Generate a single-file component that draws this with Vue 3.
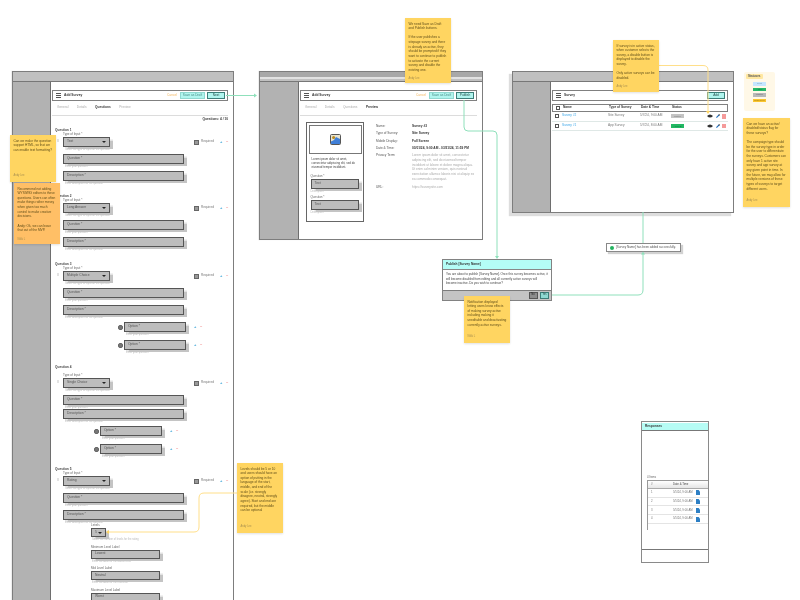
<script setup>
const questions = [
  { id: 1, gap: 'g7', type: 'Text', options: [] },
  { id: 2, gap: 'g10', type: 'Long Answer', options: [] },
  { id: 3, gap: 'g12', type: 'Multiple Choice', options: ['Option *', 'Option *'], indent: 'opt-far' },
  { id: 4, gap: 'g9', type: 'Single Choice', options: ['Option *', 'Option *'], indent: 'opt-near', low: true },
  { id: 5, gap: 'g7', type: 'Rating', options: [], rating: true }
]
const levels = [
  { label: 'Minimum Level Label', value: 'Lowest', help: 'Enter the label for the lowest level' },
  { label: 'Mid Level Label', value: 'Neutral', help: 'Enter the label for the mid level' },
  { label: 'Maximum Level Label', value: 'Worst', help: '' }
]
const details = [
  ['Name:', 'Survey #3'],
  ['Type of Survey:', 'Site Survey'],
  ['Mobile Display:', 'Full Screen'],
  ['Date & Time:', '03/01/24, 9:00 AM - 03/31/24, 11:59 PM']
]
const surveys = [
  { name: 'Survey #2', type: 'Site Survey', date: '5/7/24, 9:00 AM', status: 'Inactive', cls: 'st-gray' },
  { name: 'Survey #1', type: 'App Survey', date: '5/7/24, 8:00 AM', status: 'ACTIVE', cls: 'st-green' }
]
const responses = [1, 2, 3, 4]
const notes = [
  { cls: 'n1', paras: ['Can we make the question support HTML, so that we can enable text formatting?'], by: 'Andy Lee' },
  { cls: 'n2', paras: ['Recommend not adding WYSIWIG editors to these questions. Users can often make things rather messy when given too much control to make creative decisions.', 'Andy: Ok, we can leave that out of the MVP.'], by: 'Nikki L' },
  { cls: 'n3', paras: ['We need Save as Draft and Publish buttons.', 'If the user publishes a sitepage survey and there is already an active, they should be prompted if they want to continue to publish to activate the current survey and disable the existing one.'], by: 'Andy Lee' },
  { cls: 'n4', paras: ['If survey is in active status, when customer selects the survey, a disable button is displayed to disable the survey.', 'Only active surveys can be disabled.'], by: 'Andy Lee' },
  { cls: 'n5', paras: ['Can we have an active/ disabled/status flag for these surveys?', 'The campaign type should be the survey type in order for the user to differentiate the surveys. Customers can only have 1 active site survey and app survey at any given point in time. In the future, we may allow for multiple versions of these types of surveys to target different users.'], by: 'Andy Lee' },
  { cls: 'n6', paras: ['Levels should be 5 or 10 and users should have an option of putting in the language of the start, middle, and end of the scale (i.e. strongly disagree, neutral, strongly agree). Start and end are required, but the middle can be optional'], by: 'Andy Lee' },
  { cls: 'n7', paras: ['Notification displayed letting users know effects of making survey active including making it uneditable and deactivating currently active surveys.'], by: 'Nikki L' }
]
</script>

<template>
  <div class="canvas">
    <!-- Window 1: questions -->
    <section class="win w1">
      <div class="topbar"></div>
      <div class="winbody">
        <aside class="side"></aside>
        <main class="content">
          <header class="head">
            <span class="burger"><i></i><i></i><i></i></span>
            <b class="head-title">Add Survey</b>
            <span class="cancel">Cancel</span>
            <span class="btn btn-draft">Save as Draft</span>
            <span class="btn btn-next">Next</span>
          </header>
          <nav class="tabs">
            <span>General</span><span>Details</span><span class="on">Questions</span><span>Preview</span>
          </nav>
          <div class="count">Questions: 4 / 10</div>
          <div v-for="q in questions" :key="q.id" class="question" :class="q.gap">
            <div class="q-title">Question {{ q.id }}</div>
            <div class="label" :class="{ 'label-low': q.low }">Type of Input *</div>
            <div class="q-row">
              <span class="grip">⠿</span>
              <div class="box select"><span>{{ q.type }}</span><em class="caret"></em></div>
              <div class="req">
                <span class="check"></span>
                <span class="req-text">Required</span>
                <span class="plus">+</span><span class="minus">−</span>
              </div>
            </div>
            <div class="help hq">Select the type of input for the question</div>
            <div class="box wide"><span>Question *</span></div>
            <div class="help hq">Enter your question</div>
            <div class="box wide" :class="{ tight: q.low }"><span>Description *</span></div>
            <div class="help hq">Enter description for the question</div>
            <div v-for="(o, i) in q.options" :key="i" class="opt" :class="q.indent">
              <div class="opt-row">
                <span class="check round"></span>
                <div class="box optbox"><span>{{ o }}</span></div>
                <span class="plus">+</span><span class="minus">−</span>
              </div>
              <div class="help ho">Enter your question</div>
            </div>
            <div v-if="q.rating" class="rating">
              <div class="label">Levels</div>
              <div class="box lvl"><span>5</span><em class="caret"></em></div>
              <div class="help">Select the number of levels for the rating</div>
              <div v-for="l in levels" :key="l.label" class="lvl-item">
                <div class="label">{{ l.label }}</div>
                <div class="box lvl-box"><span>{{ l.value }}</span></div>
                <div class="help">{{ l.help }}</div>
              </div>
            </div>
          </div>
        </main>
      </div>
    </section>

    <!-- Window 2: preview -->
    <section class="win w2">
      <div class="topbar"></div>
      <div class="winbody">
        <aside class="side"></aside>
        <main class="content">
          <header class="head">
            <span class="burger"><i></i><i></i><i></i></span>
            <b class="head-title">Add Survey</b>
            <span class="cancel">Cancel</span>
            <span class="btn btn-draft">Save as Draft</span>
            <span class="btn btn-next">Publish</span>
          </header>
          <nav class="tabs tabs2">
            <span>General</span><span>Details</span><span>Questions</span><span class="on">Preview</span>
          </nav>
          <div class="preview">
            <div class="card">
              <div class="card-img">
                <svg width="11" height="11" viewBox="0 0 11 11">
                  <rect x="0.5" y="0.5" width="10" height="10" rx="1" fill="#e9e4cf" stroke="#555" />
                  <circle cx="3.6" cy="3.4" r="1.5" fill="#b98a1e" />
                  <path d="M1 10V7.5L4 6l2-3 4 2v5z" fill="#3f7fd8" />
                </svg>
              </div>
              <p class="card-text">Lorem ipsum dolor sit amet, consectetur adipiscing elit, sed do eiusmod tempor incididunt.</p>
              <div class="label">Question *</div>
              <div class="box cardbox"><span>Text</span></div>
              <div class="help">Description</div>
              <div class="label lab2">Question *</div>
              <div class="box cardbox"><span>Text</span></div>
              <div class="help">Description</div>
            </div>
            <dl class="facts">
              <template v-for="d in details" :key="d[0]">
                <dt>{{ d[0] }}</dt><dd class="strong">{{ d[1] }}</dd>
              </template>
              <dt>Privacy Term:</dt>
              <dd class="lorem">Lorem ipsum dolor sit amet, consectetur adipiscing elit, sed do eiusmod tempor incididunt ut labore et dolore magna aliqua. Ut enim ad minim veniam, quis nostrud exercitation ullamco laboris nisi ut aliquip ex ea commodo consequat.</dd>
              <dt>URL:</dt>
              <dd class="lorem">https://surveysite.com</dd>
            </dl>
          </div>
        </main>
      </div>
    </section>

    <!-- Window 3: list -->
    <section class="win w3">
      <div class="topbar"></div>
      <div class="winbody">
        <aside class="side"></aside>
        <main class="content">
          <header class="head">
            <span class="burger"><i></i><i></i><i></i></span>
            <b class="head-title">Survey</b>
            <span class="btn btn-next btn-add">Add</span>
          </header>
          <div class="grid-row grid-head">
            <span class="check hollow"></span>
            <b>Name</b><b>Type of Survey</b><b>Date &amp; Time</b><b>Status</b>
          </div>
          <div v-for="s in surveys" :key="s.name" class="grid-row grid-item">
            <span class="check hollow"></span>
            <span class="link">{{ s.name }}</span>
            <span>{{ s.type }}</span>
            <span>{{ s.date }}</span>
            <span class="status" :class="s.cls">{{ s.status }}</span>
            <svg class="ic" width="6" height="4" viewBox="0 0 6 4"><path d="M0 2q3-3 6 0q-3 3-6 0z" fill="#333" /></svg>
            <svg class="ic" width="4" height="4" viewBox="0 0 4 4"><path d="M.4 3.6L3 1" stroke="#2470c0" stroke-width="1.1" /><circle cx="3.2" cy=".9" r=".7" fill="#222" /></svg>
            <span class="trash"></span>
          </div>
        </main>
      </div>
    </section>

    <!-- Status legend -->
    <aside class="legend">
      <b class="legend-title">Statuses</b>
      <div class="chips">
        <span class="chip c-blue">Draft</span>
        <span class="chip c-green">Active</span>
        <span class="chip c-gray">Inactive</span>
        <span class="chip c-yellow">Scheduled</span>
      </div>
    </aside>

    <!-- Publish modal -->
    <section class="modal">
      <div class="modal-title">Publish [Survey Name]</div>
      <p class="modal-body">You are about to publish [Survey Name]. Once this survey becomes active, it will become disabled from editing and all currently active surveys will become inactive. Do you wish to continue?</p>
      <div class="modal-foot">
        <span class="mbtn mno">No</span>
        <span class="mbtn myes">Yes</span>
      </div>
    </section>

    <!-- Toast -->
    <div class="toast">
      <svg width="4" height="4" viewBox="0 0 4 4"><circle cx="2" cy="2" r="2" fill="#23b35f" /></svg>
      <span>[Survey Name] has been added successfully.</span>
    </div>

    <!-- Responses -->
    <section class="resp">
      <div class="resp-title">Responses</div>
      <div class="resp-main">
        <div class="resp-count">4 Items</div>
        <div class="resp-table">
          <div class="resp-row resp-head"><span>#</span><span>Date &amp; Time</span></div>
          <div v-for="r in responses" :key="r" class="resp-row">
            <span>{{ r }}</span><span>5/5/24, 9:00 AM</span>
            <svg width="4" height="5" viewBox="0 0 4 5"><path d="M0 0h2.6L4 1.4V5H0z" fill="#2d7fc4" /></svg>
          </div>
        </div>
      </div>
      <div class="resp-foot"></div>
    </section>

    <!-- Connectors -->
    <svg class="wires" width="800" height="600" viewBox="0 0 800 600">
      <g fill="none" stroke="#8fe0bb" stroke-width="1">
        <path d="M226 95.5H255" />
        <path d="M464 100V127Q464 131 468 131H493Q497 131 497 135V257" />
        <path d="M552 295H638Q643 295 643 290V253" />
        <path d="M643 212V243" />
      </g>
      <g fill="#8fe0bb">
        <path d="M257 95.5l-3-2v4z" />
        <path d="M497 259l-2-3h4z" />
        <path d="M643 251.500l-2 3h4z" />
      </g>
      <g fill="none" stroke="#ffdf8a" stroke-width="1">
        <path d="M659 65.500H703Q708 65.500 708 70V112" />
        <path d="M237 493H204Q199 493 199 498V527Q199 532 194 532H109" />
      </g>
      <g fill="#ffd561">
        <path d="M708 114l-2-3h4z" />
        <path d="M106 532l3-2v4z" />
      </g>
    </svg>

    <!-- Sticky notes -->
    <article v-for="n in notes" :key="n.cls" class="note" :class="n.cls">
      <p v-for="(p, i) in n.paras" :key="i">{{ p }}</p>
      <small>{{ n.by }}</small>
    </article>
  </div>
</template>

<style scoped>
.canvas {
  position: relative;
  width: 800px;
  height: 600px;
  overflow: hidden;
  background: #fff;
  font-family: "Liberation Sans", Arial, sans-serif;
  font-size: 3.2px;
  line-height: 1.2;
  color: #555;
  filter: blur(0.3px);
}
.win {
  position: absolute;
  display: flex;
  flex-direction: column;
  background: #fff;
  border: 1.5px solid #7d7d7d;
  box-sizing: border-box;
  box-shadow: -1.5px 0 1px #ddd;
}
.w1 { left: 12px; top: 71px; width: 222px; height: 545px; }
.w2 { left: 259px; top: 71px; width: 224px; height: 169px; }
.w3 { left: 512px; top: 71px; width: 222px; height: 142px; box-shadow: -3px 3px 1px #ddd; }
.topbar {
  flex: none;
  height: 9px;
  background: #c0c0c0;
  border-bottom: 1.5px solid #777;
}
.w2 .topbar { background: linear-gradient(#a8a8a8 0 60%, #e2e2e2 60% 75%, #c0c0c0 75%); }
.winbody { flex: 1; display: flex; min-height: 0; }
.side {
  flex: none;
  width: 37px;
  background: #b2b2b2;
  border-right: 1.5px solid #6e6e6e;
}
.content { flex: 1; padding: 8px 5px 0 1px; min-width: 0; }
.head {
  display: flex;
  align-items: center;
  height: 11px;
  box-sizing: border-box;
  border: 1.5px solid #808080;
  padding: 0 2px 0 3px;
  color: #333;
}
.burger { display: flex; flex-direction: column; justify-content: space-between; width: 5px; height: 5px; margin-right: 3px; }
.burger i { display: block; height: 1px; background: #555; }
.head-title { font-size: 3.300px; }
.cancel { margin-left: auto; margin-right: 3px; color: #f4b860; }
.btn {
  box-sizing: border-box;
  height: 7px;
  display: flex;
  align-items: center;
  justify-content: center;
  background: #b0f5ee;
  color: #4b8f88;
}
.btn-draft { width: 25px; border: 1px solid #8fd8d0; margin-right: 2px; }
.btn-next { width: 18px; border: 1.5px solid #3d7f7a; color: #264f4c; }
.btn-add { margin-left: auto; }
.tabs { display: flex; height: 15px; align-items: center; border-bottom: 1px solid #dcdcdc; box-sizing: border-box; padding-left: 5px; color: #aaa; }
.tabs span { margin-right: 8.500px; }
.tabs .on { color: #333; font-weight: 700; }
.count { text-align: right; margin-top: 2px; color: #333; font-weight: 700; height: 4px; }
.g7 { margin-top: 7px; }
.g9 { margin-top: 9px; }
.g10 { margin-top: 10px; }
.g12 { margin-top: 12px; }
.question:first-of-type { margin-top: 4px; }
.q-title { margin-left: 3px; height: 4px; font-weight: 700; color: #444; }
.label { margin-left: 11px; height: 3.5px; color: #666; margin-bottom: 0.5px; font-size: 3px; }
.label-low { margin-top: 4px; }
.q-row { display: flex; align-items: center; }
.grip { width: 11px; text-align: center; font-size: 3px; color: #888; }
.box {
  position: relative;
  box-sizing: border-box;
  height: 10px;
  display: flex;
  align-items: center;
  padding: 0 3px;
  background: #bdbdbd;
  border: 1.5px solid #555;
  box-shadow: 2.500px 1.500px 1px #c4c4c4;
  color: #555;
  font-size: 3.300px;
}
.select { width: 47px; }
.caret {
  margin-left: auto;
  width: 0;
  height: 0;
  border-left: 2px solid transparent;
  border-right: 2px solid transparent;
  border-top: 2px solid #222;
}
.req { margin-left: auto; margin-right: -3px; display: flex; align-items: center; }
.check {
  display: inline-block;
  box-sizing: border-box;
  width: 5px;
  height: 5px;
  background: #999;
  border: 1px solid #666;
}
.round { border-radius: 2px; background: #777; }
.hollow { background: #fff; border: 1px solid #555; }
.req-text { margin: 0 7px 0 2px; color: #777; width: 12px; }
.plus { color: #3aa3d6; width: 6px; font-weight: 700; font-size: 4px; }
.minus { color: #ef8a8a; width: 5px; font-weight: 700; font-size: 4px; }
.help { margin: 1px 0 3px 13px; height: 3px; font-size: 2.600px; color: #b8b8b8; white-space: nowrap; }
.wide { margin-left: 11px; width: 121px; }
.tight { margin-top: -3px; }
.opt { display: flex; flex-direction: column; margin-top: 1px; }
.opt-row { display: flex; align-items: center; }
.opt-far { margin-left: 66px; }
.opt-near { margin-left: 42px; }
.optbox { width: 62px; margin: 0 8px 0 1px; }
.ho { margin-left: 8px; }
.rating { margin: -3px 0 0 39px; }
.rating .label { margin-left: 0; }
.rating .help { margin-left: 1px; }
.lvl { width: 15px; height: 9px; }
.lvl-item { margin-top: 4.500px; }
.lvl-box { width: 69px; height: 9px; }
.w2 .side { width: 38px; }
.preview { display: flex; margin-top: 6px; padding-left: 6px; }
.card {
  flex: none;
  box-sizing: border-box;
  width: 58px;
  height: 100px;
  padding: 1.5px;
  border: 1.5px solid #666;
}
.card-img {
  height: 29px;
  display: flex;
  align-items: center;
  justify-content: center;
  border: 1px solid #777;
  box-sizing: border-box;
}
.card-text { margin: 3px 3px 6px; line-height: 4.200px; color: #444; font-size: 2.900px; }
.card .label { margin-left: 2px; }
.lab2 { margin-top: 3px; }
.cardbox { margin-left: 2px; width: 48px; }
.card .help { margin-left: 2px; margin-bottom: 0; }
.facts {
  margin: 2px 0 0 12px;
  flex: 1;
  display: grid;
  grid-template-columns: 36px 1fr;
  row-gap: 3.300px;
  align-content: start;
  color: #555;
  font-size: 3.200px;
  line-height: 4px;
}
.facts dd { margin: 0; }
.strong { font-weight: 700; color: #333; white-space: nowrap; }
.lorem { color: #aaa; line-height: 4.700px; }
.grid-row {
  display: grid;
  align-items: center;
  padding-left: 3px;
  box-sizing: border-box;
}
.grid-row .check { width: 4px; height: 4px; }
.grid-head {
  margin-top: 3px;
  height: 8px;
  border: 1.500px solid #808080;
  color: #333;
  grid-template-columns: 7px 46px 32px 31px 36px;
}
.grid-item {
  grid-template-columns: 7px 46px 32px 31px 36px 9px 6px 6px;
  height: 9.500px;
  border-bottom: 1px solid #dfe8e6;
  color: #777;
}
.link { color: #3aa6e8; }
.status {
  width: 13px;
  height: 4px;
  font-size: 2.200px;
  line-height: 4px;
  text-align: center;
}
.st-gray { background: #c4c4c4; color: #777; }
.st-green { background: #22b863; color: #0a6a35; }
.ic { display: block; }
.trash { display: block; width: 3.500px; height: 4.500px; background: #f59a9a; }
.legend {
  position: absolute;
  left: 744px;
  top: 72px;
  width: 31px;
  height: 39px;
  box-sizing: border-box;
  padding: 1.500px 2px;
  background: #fff8e7;
  border-radius: 2px;
}
.legend-title {
  display: inline-block;
  padding: 1px 2px;
  background: #ffe7a0;
  border-radius: 1px;
  font-size: 3px;
  color: #555;
}
.chips { display: flex; flex-direction: column; align-items: center; gap: 2px; margin-top: 3px; }
.chip { width: 13px; height: 3.500px; font-size: 2.200px; line-height: 3.500px; text-align: center; }
.c-blue { background: #c5e6ff; color: #7a9ab0; }
.c-green { background: #25b868; color: #0b6a36; }
.c-gray { background: #b8b8b8; color: #666; }
.c-yellow { background: #fac52e; color: #96720a; }
.modal {
  position: absolute;
  left: 442px;
  top: 259px;
  width: 110px;
  height: 42px;
  box-sizing: border-box;
  display: flex;
  flex-direction: column;
  border: 1.500px solid #828282;
  background: #fff;
}
.modal-title {
  flex: none;
  height: 9px;
  padding: 0 3px;
  line-height: 9px;
  background: #b4fdf6;
  border-bottom: 1px solid #888;
  font-weight: 700;
  color: #333;
}
.modal-body { flex: 1; margin: 0; padding: 2px 3px; line-height: 4.500px; font-size: 3px; color: #444; }
.modal-foot {
  flex: none;
  height: 9.500px;
  display: flex;
  align-items: center;
  justify-content: flex-end;
  gap: 2.500px;
  padding-right: 2px;
  background: #c4c4c4;
  border-top: 1.500px solid #7c7c7c;
}
.mbtn { width: 9px; height: 7px; box-sizing: border-box; line-height: 4px; text-align: center; font-size: 2.600px; }
.mno { background: #8c8c8c; border: 1.500px solid #555; color: #222; }
.myes { background: #8ed9d2; border: 1.500px solid #3c7d78; color: #244; }
.toast {
  position: absolute;
  left: 606px;
  top: 243px;
  width: 75px;
  height: 9px;
  box-sizing: border-box;
  display: flex;
  align-items: center;
  gap: 2px;
  padding-left: 3px;
  background: #fff;
  border: 1.500px solid #888;
  box-shadow: 2px 2px 1px #d2d2d2;
  font-size: 3px;
  color: #555;
}
.resp {
  position: absolute;
  left: 641px;
  top: 421px;
  width: 68px;
  height: 142px;
  box-sizing: border-box;
  display: flex;
  flex-direction: column;
  border: 1.500px solid #8a8a8a;
  background: #fff;
}
.resp-title {
  flex: none;
  height: 7px;
  margin-top: 1px;
  line-height: 7px;
  padding-left: 3px;
  background: #b6fcf5;
  border-bottom: 1px solid #777;
  font-weight: 700;
  color: #333;
}
.resp-main { flex: 1; padding: 45px 0 0 5px; }
.resp-count { font-size: 2.800px; color: #666; height: 4px; }
.resp-table { border-left: 1px solid #999; height: 50px; }
.resp-row {
  display: grid;
  grid-template-columns: 22px 23px 4px;
  align-items: center;
  height: 8.800px;
  padding-left: 3px;
  font-size: 2.800px;
  color: #777;
  border-bottom: 1px solid #e4e4e4;
  box-sizing: border-box;
}
.resp-head { background: linear-gradient(#fff, #e5e5e5); border-top: 1px solid #999; border-bottom: 1px solid #aaa; color: #444; }
.resp-foot { flex: none; height: 12px; border-top: 1px solid #777; }
.wires { position: absolute; left: 0; top: 0; pointer-events: none; }
.note {
  position: absolute;
  box-sizing: border-box;
  display: flex;
  flex-direction: column;
  padding: 3.500px;
  background: #ffd561;
  box-shadow: 0 1px 2px rgba(0, 0, 0, 0.12);
  color: #5f4e1a;
  font-size: 3.200px;
  line-height: 4.650px;
}
.note p { margin: 0 0 4.600px; }
.note small { margin-top: auto; font-size: 2.600px; color: #a89050; }
.n1 { left: 10px; top: 135px; width: 46px; height: 47px; }
.n2 { left: 14px; top: 183px; width: 46px; height: 61px; background: #ffbf66; }
.n3 { left: 405px; top: 18px; width: 46px; height: 65px; }
.n4 { left: 613px; top: 40px; width: 46px; height: 52px; }
.n5 { left: 743px; top: 118px; width: 47px; height: 89px; }
.n6 { left: 237px; top: 463px; width: 46px; height: 70px; }
.n7 { left: 464px; top: 296px; width: 46px; height: 47px; }
</style>

<style>
html, body { margin: 0; overflow: hidden; background: #fff; }
</style>
